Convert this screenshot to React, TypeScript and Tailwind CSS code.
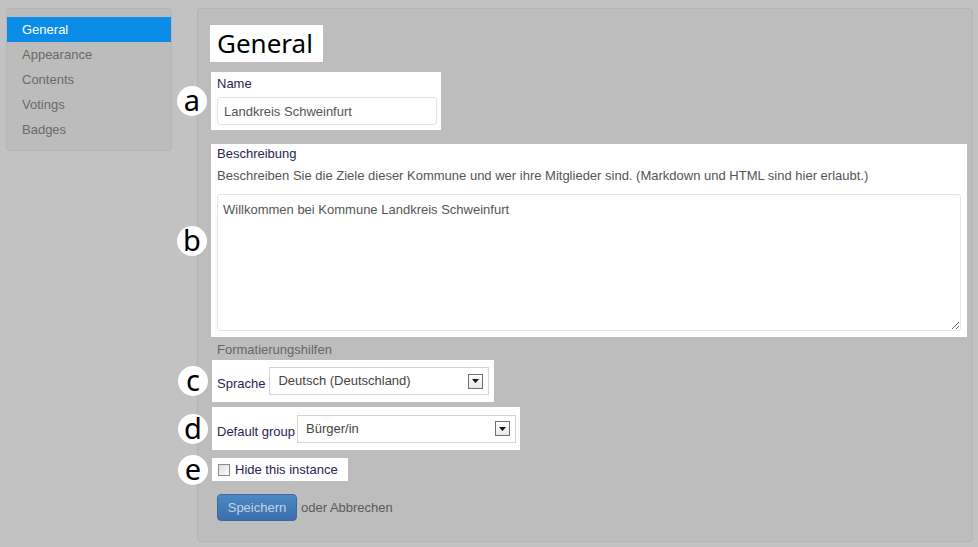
import type { ReactNode } from "react";

const font = "font-['Liberation_Sans',Arial,sans-serif]";

const navItems = ["General", "Appearance", "Contents", "Votings", "Badges"];

function Marker({ letter }: { letter: string }) {
  return (
    <span className="absolute left-[-34px] top-1/2 -translate-y-1/2 w-[30px] h-[30px] rounded-full bg-white flex items-center justify-center font-['Noto_Sans',sans-serif] text-[29px] leading-none text-black pb-[3px]">
      {letter}
    </span>
  );
}

function Highlight({
  letter,
  className,
  children,
}: {
  letter?: string;
  className: string;
  children: ReactNode;
}) {
  return (
    <div className={`relative bg-white ${className}`}>
      {letter && <Marker letter={letter} />}
      {children}
    </div>
  );
}

function FakeSelect({ value, width }: { value: string; width: string }) {
  return (
    <div
      className={`${width} h-[28px] border border-[#d4d4d4] bg-white flex items-center pl-[8px] pr-[5px] text-[13px] text-[#444]`}
    >
      <span className="flex-1">{value}</span>
      {/* classic dropdown arrow */}
      <span className="w-[15px] h-[15px] border border-[#6f6f6f] bg-gradient-to-b from-white to-[#e8e8e8] flex items-center justify-center">
        <svg width="7" height="4" viewBox="0 0 7 4">
          <path d="M0 0h7L3.5 4z" fill="#111" />
        </svg>
      </span>
    </div>
  );
}

export default function App() {
  return (
    <div className={`w-[978px] h-[547px] bg-[#c2c2c2] flex items-start ${font}`}>
      {/* Sidebar */}
      <aside className="ml-[6px] mt-[8px] w-[166px] h-[143px] bg-[#bcbcbc] border border-[#b5b5b5] rounded-[4px] pt-[8px]">
        <nav className="flex flex-col">
          {navItems.map((item, i) => (
            <div
              key={item}
              className={`h-[25px] pl-[15px] flex items-center text-[13px] ${
                i === 0 ? "bg-[#0b8ce6] text-white" : "text-[#6a6a6a]"
              }`}
            >
              {item}
            </div>
          ))}
        </nav>
      </aside>

      {/* Main panel */}
      <main className="ml-[25px] mt-[8px] w-[776px] h-[534px] bg-[#bdbdbd] border border-[#b4b4b4] rounded-[4px] pl-[12px] pt-[16px] flex flex-col items-start">
        <div className="bg-white h-[37px] w-[113px] pl-[7px] flex items-center font-['Noto_Sans',sans-serif] text-[26px] text-black leading-none pb-[2px]">
          General
        </div>

        <Highlight letter="a" className="mt-[10px] ml-[1px] w-[230px] h-[58px] pl-[6px] pt-[4px]">
          <div className="text-[13px] leading-[15px] text-[#2a2450]">Name</div>
          <input
            readOnly
            value="Landkreis Schweinfurt"
            className="mt-[6px] w-[220px] h-[28px] border border-[#e4e4e4] rounded-[3px] px-[6px] text-[13px] text-[#555] outline-none"
          />
        </Highlight>

        <Highlight letter="b" className="mt-[14px] ml-[1px] w-[756px] h-[193px] pl-[6px] pt-[2px]">
          <div className="text-[13px] leading-[16px] text-[#2a2450]">Beschreibung</div>
          <div className="mt-[6px] text-[13px] leading-[16px] text-[#555]">
            Beschreiben Sie die Ziele dieser Kommune und wer ihre Mitglieder sind. (Markdown und HTML sind hier erlaubt.)
          </div>
          <textarea
            readOnly
            defaultValue="Willkommen bei Kommune Landkreis Schweinfurt"
            className="mt-[10px] block w-[744px] h-[137px] border border-[#e4e4e4] rounded-[3px] px-[5px] py-[5px] text-[13px] text-[#555] outline-none"
          />
        </Highlight>

        <div className="mt-[6px] ml-[7px] text-[13px] leading-[14px] text-[#666]">
          Formatierungshilfen
        </div>

        <Highlight letter="c" className="mt-[3px] ml-[2px] w-[282px] h-[42px] pl-[5px] flex items-center gap-[4px]">
          <span className="text-[13px] text-[#2a2450] pt-[6px]">Sprache</span>
          <FakeSelect value="Deutsch (Deutschland)" width="w-[220px]" />
        </Highlight>

        <Highlight letter="d" className="mt-[5px] ml-[2px] w-[308px] h-[43px] pl-[5px] flex items-center gap-[2px]">
          <span className="text-[13px] text-[#2a2450] pt-[6px]">Default group</span>
          <FakeSelect value="Bürger/in" width="w-[219px]" />
        </Highlight>

        <Highlight letter="e" className="mt-[8px] ml-[2px] w-[136px] h-[23px] pl-[6px] flex items-center gap-[5px]">
          <span className="w-[12px] h-[12px] border border-[#8a8a8a] bg-gradient-to-br from-[#dcdcdc] to-white" />
          <span className="text-[13px] text-[#2a2450]">Hide this instance</span>
        </Highlight>

        <div className="mt-[13px] ml-[7px] flex items-center gap-[4px]">
          <button className="w-[80px] h-[27px] rounded-[4px] bg-gradient-to-b from-[#4a8ac4] to-[#3a6ead] border border-[#3a6aa0] text-[13px] text-[#c4d3e3]">
            Speichern
          </button>
          <span className="text-[13px] text-[#5a5a5a]">oder Abbrechen</span>
        </div>
      </main>
    </div>
  );
}
